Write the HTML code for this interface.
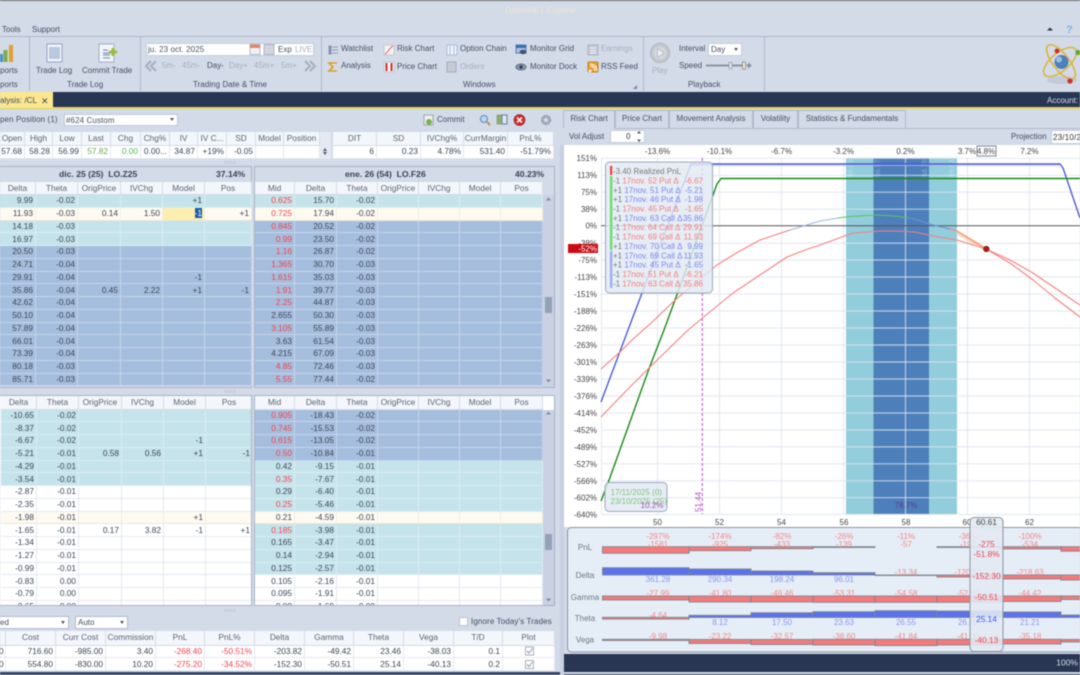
<!DOCTYPE html>
<html><head><meta charset="utf-8"><title>OptionNET Explorer</title>
<style>
html,body{margin:0;padding:0;background:#d3dae8}
#p{position:relative;width:1080px;height:675px;overflow:hidden;background:#d3dae8;font-family:"Liberation Sans",sans-serif;font-size:8px;color:#465063;filter:blur(.4px)}
.a{position:absolute;white-space:nowrap;line-height:10px}
.d{color:#a6afbf}
.g{position:absolute;background:#aeb8ca;width:1px}
.box{position:absolute;background:#fff;border:1px solid #b4bdce;box-sizing:border-box}
.arr{position:absolute;width:0;height:0;border-left:2.5px solid transparent;border-right:2.5px solid transparent;border-top:3px solid #556}
table{position:absolute;border-collapse:separate;border-spacing:0;table-layout:fixed;font-size:8.3px;color:#3c4658}
td,th{box-sizing:border-box;overflow:hidden;white-space:nowrap;line-height:11px}
td{height:12.75px;padding:0 2px 0 0;text-align:right;border-right:1px solid rgba(255,255,255,.35);border-bottom:1px solid rgba(255,255,255,.35)}
th{height:13px;font-weight:normal;color:#5a6475;background:#f3f6fb;border-right:1px solid #d6dce8;border-bottom:1px solid #d6dce8;padding:0}
.c{background:#c5e3ea}.b{background:#a6bedd}.y{background:#fffaf0}.w{background:#fff}
.w td{border-right:1px solid #e4e8f0;border-bottom:1px solid #e4e8f0}
.y td{border-right:1px solid #f0ede2;border-bottom:1px solid #e8e6dc}
.r{color:#f0434e}
.pan{position:absolute;border:1px solid #a9b3c6;box-sizing:border-box;overflow:hidden}
.tab{position:absolute;top:110px;height:18px;box-sizing:border-box;border:1px solid #b0bacb;border-bottom:0;text-align:center;line-height:16px;background:#d3dae8;color:#465063}
.sb{position:absolute;background:#c9d1e3;width:11px}
.th{position:absolute;left:2px;width:7px;height:16px;background:#93a2b7}
.spl{position:absolute;width:12px;height:3px;background:repeating-linear-gradient(90deg,#b5bfd0 0 1px,#dfe4ee 1px 2px)}
svg{position:absolute;left:0;top:0}
</style></head><body><div id="p">

<!-- title + chrome -->
<div style="position:absolute;left:0;top:0;width:1080px;height:1px;background:#666"></div>
<div class="a" style="left:505px;top:6px;color:#f1ead0;opacity:.9">OptionNET Explorer</div>
<div class="a" style="left:2px;top:25px">Tools</div>
<div class="a" style="left:32px;top:25px">Support</div>
<div style="position:absolute;left:0;top:36px;width:1080px;height:1px;background:#aeb8ca"></div>
<div class="g" style="left:29px;top:37px;height:54px"></div>
<div class="g" style="left:140px;top:37px;height:54px"></div>
<div class="g" style="left:321px;top:37px;height:54px"></div>
<div class="g" style="left:643px;top:37px;height:54px"></div>
<div class="g" style="left:764px;top:37px;height:54px"></div>

<!-- ribbon text -->
<div class="a" style="left:0;top:66px">ports</div>
<div class="a" style="left:0;top:80px">ports</div>
<div class="a" style="left:36px;top:66px">Trade Log</div>
<div class="a" style="left:82px;top:66px">Commit Trade</div>
<div class="a" style="left:67px;top:80px">Trade Log</div>

<div class="box" style="left:146px;top:43px;width:168px;height:13px;border-color:#c6cedc"></div>
<div class="a" style="left:148px;top:44.5px;letter-spacing:.1px">ju. 23 oct. 2025</div>
<div class="a" style="left:278px;top:44.5px">Exp</div>
<div class="a d" style="left:295px;top:44.5px">LIVE</div>
<div class="a d" style="left:162px;top:61px">5m-</div>
<div class="a d" style="left:182px;top:61px">45m-</div>
<div class="a" style="left:207px;top:61px">Day-</div>
<div class="a d" style="left:229px;top:61px">Day+</div>
<div class="a d" style="left:254px;top:61px">45m+</div>
<div class="a d" style="left:281px;top:61px">5m+</div>
<div class="a" style="left:193px;top:80px;letter-spacing:.05px">Trading Date &amp; Time</div>

<div class="a" style="left:341px;top:44px">Watchlist</div>
<div class="a" style="left:341px;top:61px">Analysis</div>
<div class="a" style="left:397px;top:44px">Risk Chart</div>
<div class="a" style="left:397px;top:62px">Price Chart</div>
<div class="a" style="left:460px;top:44px">Option Chain</div>
<div class="a d" style="left:460px;top:62px">Orders</div>
<div class="a" style="left:530px;top:44px">Monitor Grid</div>
<div class="a" style="left:530px;top:62px">Monitor Dock</div>
<div class="a d" style="left:601px;top:44px">Earnings</div>
<div class="a" style="left:601px;top:62px">RSS Feed</div>
<div class="a" style="left:463px;top:80px">Windows</div>
<div class="a d" style="left:652px;top:66px">Play</div>
<div class="a" style="left:679px;top:44px">Interval</div>
<div class="box" style="left:708px;top:43px;width:34px;height:13px;border-color:#c6cedc"></div>
<div class="a" style="left:711px;top:44.5px">Day</div>
<div class="arr" style="left:734px;top:48px"></div>
<div class="a" style="left:679px;top:61px">Speed</div>
<div class="a" style="left:688px;top:80px">Playback</div>

<!-- navy bar -->
<div style="position:absolute;left:0;top:92px;width:1080px;height:15px;background:#283654"></div>
<div style="position:absolute;left:0;top:107px;width:1080px;height:1.5px;background:#e6d35a"></div>
<div style="position:absolute;left:0;top:92px;width:53px;height:16px;background:#fbe88e"></div>
<div class="a" style="left:0;top:96px;color:#3f4a5f">alysis: /CL</div>
<div class="a" style="left:41px;top:96px;color:#3f4a5f;font-size:9px">✕</div>
<div class="a" style="left:1047px;top:96px;color:#d6dbe8">Account:</div>

<!-- left toolbar -->
<div class="a" style="left:0;top:115px;letter-spacing:.1px">pen Position (1)</div>
<div class="box" style="left:64px;top:114px;width:114px;height:12px;border-color:#c0c8d8"></div>
<div class="a" style="left:66px;top:115.5px;letter-spacing:.1px">#624 Custom</div>
<div class="arr" style="left:170px;top:118px"></div>
<div class="a" style="left:437px;top:115px">Commit</div>

<!-- top tables -->
<table style="left:0;top:132px;width:320px">
<colgroup><col width="25"><col width="28"><col width="29"><col width="29"><col width="30"><col width="29"><col width="28"><col width="29"><col width="29"><col width="28"><col width="36"></colgroup>
<tr><th style="height:14px">Open<th>High<th>Low<th>Last<th>Chg<th>Chg%<th>IV<th>IV C...<th>SD<th>Model<th>Position</tr>
<tr class="w"><td>57.68<td>58.28<td>56.99<td style="color:#6aa84f">57.82<td style="color:#55b65a">0.00<td>0.00...<td>34.87<td>+19%<td>-0.05<td><td></tr>
</table>
<div class="sb" style="left:320px;top:132px;height:27px;background:#e4e9f2"></div>
<div class="arr" style="left:323px;top:152px"></div>
<div class="arr" style="left:323px;top:148px;transform:rotate(180deg)"></div>
<table style="left:333px;top:132px;width:221px">
<colgroup><col width="44"><col width="44"><col width="43"><col width="44"><col width="46"></colgroup>
<tr><th style="height:14px">DIT<th>SD<th>IVChg%<th>CurrMargin<th>PnL%</tr>
<tr class="w"><td>6<td>0.23<td>4.78%<td>531.40<td>-51.79%</tr>
</table>
<div class="spl" style="left:225px;top:161px"></div>

<!-- dic upper -->
<div class="pan" style="left:-1px;top:166px;width:253px;height:222px;background:#d3dae8"></div>
<div class="a" style="left:59px;top:169px;font-size:8.6px;font-weight:bold;color:#3a4456">dic. 25 (25)&nbsp; LO.Z25</div>
<div class="a" style="left:216px;top:169px;font-size:8.6px;font-weight:bold;color:#3a4456">37.14%</div>
<table style="left:0;top:182px;width:252px">
<colgroup><col width="36"><col width="42"><col width="43"><col width="42"><col width="42"><col width="47"></colgroup>
<tr><th>Delta<th>Theta<th>OrigPrice<th>IVChg<th>Model<th>Pos</tr>
<tr class="c"><td>9.99<td>-0.02<td><td><td>+1<td></tr>
<tr class="y"><td>11.93<td>-0.03<td>0.14<td>1.50<td style="background:#fdeeb0"><span style="background:#1c5aa6;color:#fff">-1</span><td>+1</tr>
<tr class="c"><td>14.18<td>-0.03<td><td><td><td></tr>
<tr class="c"><td>16.97<td>-0.03<td><td><td><td></tr>
<tr class="b"><td>20.50<td>-0.03<td><td><td><td></tr>
<tr class="b"><td>24.71<td>-0.04<td><td><td><td></tr>
<tr class="b"><td>29.91<td>-0.04<td><td><td>-1<td></tr>
<tr class="b"><td>35.86<td>-0.04<td>0.45<td>2.22<td>+1<td>-1</tr>
<tr class="b"><td>42.62<td>-0.04<td><td><td><td></tr>
<tr class="b"><td>50.10<td>-0.04<td><td><td><td></tr>
<tr class="b"><td>57.89<td>-0.04<td><td><td><td></tr>
<tr class="b"><td>66.01<td>-0.04<td><td><td><td></tr>
<tr class="b"><td>73.39<td>-0.04<td><td><td><td></tr>
<tr class="b"><td>80.18<td>-0.03<td><td><td><td></tr>
<tr class="b"><td>85.71<td>-0.03<td><td><td><td></tr>
</table>

<!-- ene upper -->
<div class="pan" style="left:254px;top:166px;width:301px;height:222px;background:#d3dae8"></div>
<div class="a" style="left:345px;top:169px;font-size:8.6px;font-weight:bold;color:#3a4456">ene. 26 (54)&nbsp; LO.F26</div>
<div class="a" style="left:515px;top:169px;font-size:8.6px;font-weight:bold;color:#3a4456">40.23%</div>
<table style="left:255px;top:182px;width:288px">
<colgroup><col width="40"><col width="42"><col width="41"><col width="41"><col width="41"><col width="41"><col width="42"></colgroup>
<tr><th>Mid<th>Delta<th>Theta<th>OrigPrice<th>IVChg<th>Model<th>Pos</tr>
<tr class="c"><td class="r">0.625<td>15.70<td>-0.02<td><td><td><td></tr>
<tr class="y"><td class="r">0.725<td>17.94<td>-0.02<td><td><td><td></tr>
<tr class="b"><td class="r">0.845<td>20.52<td>-0.02<td><td><td><td></tr>
<tr class="b"><td class="r">0.99<td>23.50<td>-0.02<td><td><td><td></tr>
<tr class="b"><td class="r">1.16<td>26.87<td>-0.02<td><td><td><td></tr>
<tr class="b"><td class="r">1.365<td>30.70<td>-0.03<td><td><td><td></tr>
<tr class="b"><td class="r">1.615<td>35.03<td>-0.03<td><td><td><td></tr>
<tr class="b"><td class="r">1.91<td>39.77<td>-0.03<td><td><td><td></tr>
<tr class="b"><td class="r">2.25<td>44.87<td>-0.03<td><td><td><td></tr>
<tr class="b"><td>2.655<td>50.30<td>-0.03<td><td><td><td></tr>
<tr class="b"><td class="r">3.105<td>55.89<td>-0.03<td><td><td><td></tr>
<tr class="b"><td>3.63<td>61.54<td>-0.03<td><td><td><td></tr>
<tr class="b"><td>4.215<td>67.09<td>-0.03<td><td><td><td></tr>
<tr class="b"><td class="r">4.85<td>72.46<td>-0.03<td><td><td><td></tr>
<tr class="b"><td class="r">5.55<td>77.44<td>-0.02<td><td><td><td></tr>
</table>
<div class="sb" style="left:543px;top:195px;height:192px"></div>
<div class="th" style="left:545px;top:297px"></div>
<div class="spl" style="left:225px;top:390px"></div>

<!-- dic lower -->
<div class="pan" style="left:-1px;top:395px;width:253px;height:211px;background:#fff">
<table style="left:1px;top:0;width:252px">
<colgroup><col width="36"><col width="42"><col width="43"><col width="42"><col width="42"><col width="47"></colgroup>
<tr><th style="height:13.5px">Delta<th>Theta<th>OrigPrice<th>IVChg<th>Model<th>Pos</tr>
<tr class="c"><td>-10.65<td>-0.02<td><td><td><td></tr>
<tr class="c"><td>-8.37<td>-0.02<td><td><td><td></tr>
<tr class="c"><td>-6.67<td>-0.02<td><td><td>-1<td></tr>
<tr class="c"><td>-5.21<td>-0.01<td>0.58<td>0.56<td>+1<td>-1</tr>
<tr class="c"><td>-4.29<td>-0.01<td><td><td><td></tr>
<tr class="c"><td>-3.54<td>-0.01<td><td><td><td></tr>
<tr class="w"><td>-2.87<td>-0.01<td><td><td><td></tr>
<tr class="w"><td>-2.35<td>-0.01<td><td><td><td></tr>
<tr class="y"><td>-1.98<td>-0.01<td><td><td>+1<td></tr>
<tr class="w"><td>-1.65<td>-0.01<td>0.17<td>3.82<td>-1<td>+1</tr>
<tr class="w"><td>-1.34<td>-0.01<td><td><td><td></tr>
<tr class="w"><td>-1.27<td>-0.01<td><td><td><td></tr>
<tr class="w"><td>-0.99<td>-0.01<td><td><td><td></tr>
<tr class="w"><td>-0.83<td>0.00<td><td><td><td></tr>
<tr class="w"><td>-0.79<td>0.00<td><td><td><td></tr>
<tr class="w"><td>-0.65<td>0.00<td><td><td><td></tr>
</table></div>

<!-- ene lower -->
<div class="pan" style="left:254px;top:395px;width:301px;height:211px;background:#fff">
<table style="left:0;top:0;width:288px">
<colgroup><col width="40"><col width="42"><col width="41"><col width="41"><col width="41"><col width="41"><col width="42"></colgroup>
<tr><th style="height:13.5px">Mid<th>Delta<th>Theta<th>OrigPrice<th>IVChg<th>Model<th>Pos</tr>
<tr class="b"><td class="r">0.905<td>-18.43<td>-0.02<td><td><td><td></tr>
<tr class="b"><td class="r">0.745<td>-15.53<td>-0.02<td><td><td><td></tr>
<tr class="b"><td class="r">0.615<td>-13.05<td>-0.02<td><td><td><td></tr>
<tr class="b"><td class="r">0.50<td>-10.84<td>-0.01<td><td><td><td></tr>
<tr class="c"><td>0.42<td>-9.15<td>-0.01<td><td><td><td></tr>
<tr class="c"><td class="r">0.35<td>-7.67<td>-0.01<td><td><td><td></tr>
<tr class="c"><td>0.29<td>-6.40<td>-0.01<td><td><td><td></tr>
<tr class="c"><td class="r">0.25<td>-5.46<td>-0.01<td><td><td><td></tr>
<tr class="y"><td>0.21<td>-4.59<td>-0.01<td><td><td><td></tr>
<tr class="c"><td class="r">0.185<td>-3.98<td>-0.01<td><td><td><td></tr>
<tr class="c"><td>0.165<td>-3.47<td>-0.01<td><td><td><td></tr>
<tr class="c"><td>0.14<td>-2.94<td>-0.01<td><td><td><td></tr>
<tr class="c"><td>0.125<td>-2.57<td>-0.01<td><td><td><td></tr>
<tr class="w"><td>0.105<td>-2.16<td>-0.01<td><td><td><td></tr>
<tr class="w"><td>0.095<td>-1.91<td>-0.01<td><td><td><td></tr>
<tr class="w"><td>0.08<td>-1.69<td>0.00<td><td><td><td></tr>
</table>
<div class="sb" style="left:288px;top:14px;height:196px"></div>
<div class="th" style="left:290px;top:138px"></div>
</div>
<div class="spl" style="left:225px;top:609px"></div>

<!-- bottom left -->
<div class="box" style="left:-2px;top:616px;width:71px;height:13px"></div>
<div class="a" style="left:0;top:617.5px">ed</div>
<div class="arr" style="left:61px;top:621px"></div>
<div class="box" style="left:75px;top:616px;width:53px;height:13px"></div>
<div class="a" style="left:78px;top:617.5px">Auto</div>
<div class="arr" style="left:120px;top:621px"></div>
<div class="box" style="left:459px;top:617px;width:9px;height:9px;border-color:#bcc4d2"></div>
<div class="a" style="left:471px;top:617px;letter-spacing:.12px">Ignore Today's Trades</div>
<table style="left:-1px;top:631px;width:556px">
<colgroup><col width="7"><col width="50"><col width="50"><col width="50"><col width="49"><col width="50"><col width="50"><col width="49"><col width="50"><col width="50"><col width="49"><col width="52"></colgroup>
<tr><th style="height:14.5px"><th>Cost<th>Curr Cost<th>Commission<th>PnL<th>PnL%<th>Delta<th>Gamma<th>Theta<th>Vega<th>T/D<th>Plot</tr>
<tr class="w"><td>0<td>716.60<td>-985.00<td>3.40<td class="r">-268.40<td class="r">-50.51%<td>-203.82<td>-49.42<td>23.46<td>-38.03<td>0.1<td></tr>
<tr class="w"><td>0<td>554.80<td>-830.00<td>10.20<td class="r">-275.20<td class="r">-34.52%<td>-152.30<td>-50.51<td>25.14<td>-40.13<td>0.2<td></tr>
</table>
<div style="position:absolute;left:0;top:672px;width:560px;height:3px;background:#3a4866"></div>

<!-- right panel -->
<div style="position:absolute;left:560px;top:145px;width:4px;height:530px;background:#c7cfe3"></div>
<div class="tab" style="left:563px;width:52px">Risk Chart</div>
<div class="tab" style="left:615px;width:54px">Price Chart</div>
<div class="tab" style="left:669px;width:84px">Movement Analysis</div>
<div class="tab" style="left:753px;width:45px">Volatility</div>
<div class="tab" style="left:798px;width:108px">Statistics &amp; Fundamentals</div>
<div style="position:absolute;left:615px;top:127.5px;width:465px;height:1px;background:#b0bacb"></div>
<div class="a" style="left:569px;top:132px">Vol Adjust</div>
<div class="box" style="left:610px;top:130px;width:35px;height:13px;border-color:#c4ccdb"></div>
<div class="a" style="left:626px;top:132px;color:#333">0</div>
<div class="a" style="left:1011px;top:132px">Projection</div>
<div class="box" style="left:1051px;top:130px;width:40px;height:14px;border-color:#c4ccdb"></div>
<div class="a" style="left:1053px;top:132.5px;letter-spacing:.2px;color:#333">23/10/2</div>
<div style="position:absolute;left:564px;top:145px;width:516px;height:382px;background:#fff"></div>

<svg width="1080" height="675" viewBox="0 0 1080 675" font-family="Liberation Sans, sans-serif" font-size="8">
<!-- ribbon icons -->
<g>
<rect x="0" y="54" width="3" height="8" fill="#4a90c8"/><rect x="3.5" y="50" width="4" height="12" fill="#7cae4a"/><rect x="9" y="45" width="4" height="17" fill="#e0a030"/>
<rect x="47" y="44" width="15" height="18" fill="#f2f5fa" stroke="#93a5c6"/><rect x="49" y="47" width="11" height="12" fill="#b9c8e0"/>
<rect x="99" y="44" width="15" height="18" fill="#f2f5fa" stroke="#a3aec4"/><rect x="103" y="52" width="7" height="4" fill="#a4b8d2"/><path d="M103 50h5M103 58h7" stroke="#7a8aa2"/><path d="M113 48v8M109 52h8" stroke="#9cbc3c" stroke-width="3"/>
<rect x="250" y="44.5" width="10" height="10" fill="#eef0f6" stroke="#b3bccd"/><rect x="250" y="44.5" width="10" height="3.5" fill="#e08868"/>
<rect x="264" y="44.5" width="10" height="10" fill="#cfd4de" stroke="#b0b8c6"/>
<path d="M156 61l-5 5 5 5 M151 61l-5 5 5 5" fill="none" stroke="#a6afbf" stroke-width="2"/>
<path d="M305 61l5 5-5 5 M310 61l5 5-5 5" fill="none" stroke="#a6afbf" stroke-width="2"/>
<path d="M329 46h2v2h-2zM329 49h2v2h-2zM329 52h2v2h-2zM332 47h6M332 50h6M332 53h6" fill="#7d8ba0" stroke="#7d8ba0" stroke-width=".8"/>
<path d="M337 63h-8l4 4-4 4h8" fill="none" stroke="#dca020" stroke-width="1.6"/>
<rect x="384" y="45" width="10" height="10" fill="#f4f4f4" stroke="#c4c8d0"/><path d="M385 54c3-1 4-6 8-8" stroke="#d66" fill="none"/>
<rect x="384" y="62" width="10" height="10" fill="#f4f4f4" stroke="#c4c8d0"/><path d="M386.5 63v8M391.5 63v8" stroke="#c33" stroke-width="2"/>
<rect x="447" y="45" width="10" height="10" fill="#eef3fb" stroke="#a8c0de"/><path d="M450 45v10M454 45v10" stroke="#a8c0de"/>
<rect x="447" y="62" width="9" height="10" fill="#c6ccd6" stroke="#aab"/>
<rect x="516" y="45" width="10" height="8" fill="#a8c4e8" stroke="#5a80b0"/><rect x="516" y="45" width="10" height="3" fill="#3a70b0"/><ellipse cx="523" cy="52" rx="3.5" ry="2.2" fill="#456"/>
<ellipse cx="521" cy="67" rx="5" ry="3" fill="#8a9ab0" stroke="#5a6a80"/><circle cx="521" cy="67" r="1.6" fill="#334"/>
<rect x="588" y="45" width="10" height="10" fill="#c4cad4" stroke="#aab3c0"/><path d="M590 48h6M590 50.5h6M590 53h6" stroke="#eef"/>
<rect x="588" y="62" width="10" height="10" rx="1" fill="#e8a030" stroke="#c08020"/><path d="M590 70a1 1 0 1 0 .1 0M590 66c3 0 5 2 5 5M590 64c4 0 7 3 7 7" stroke="#fff" fill="none"/>
<path d="M633 89l4-4v4z" fill="#7a8496"/>
<circle cx="660" cy="53" r="9.5" fill="#c4c8cf" stroke="#b0b4bc"/><circle cx="660" cy="53" r="6.5" fill="#d3d6dc"/><path d="M657.5 48.5l6.5 4.5-6.5 4.5z" fill="#eef0f4" stroke="#a8acb4" stroke-width=".6"/>
<path d="M706 65.5h38" stroke="#8c95a6" stroke-width="2"/><path d="M711 65.5h-4" stroke="#8c95a6"/>
<rect x="729" y="62.5" width="3" height="6" fill="#dfe3ea" stroke="#8d95a5" stroke-width=".7"/><rect x="742.5" y="62" width="3" height="7" fill="#f6eebc" stroke="#808898" stroke-width=".8"/>
<path d="M749 63v5M746.5 65.5h5" stroke="#7f8899" stroke-width="1.5"/>
<path d="M1047 30.5l3-3 3 3z" fill="#333"/>
<text x="1066" y="33" font-size="11" font-weight="bold" fill="#7cb4e0">?</text>
<!-- atom -->
<ellipse cx="1062" cy="80" rx="15" ry="4" fill="#bcc4d2" opacity=".7"/>
<g fill="none" stroke="#dcb434" stroke-width="1.5">
<ellipse cx="1061" cy="62" rx="21" ry="8" transform="rotate(52 1061 62)"/>
<ellipse cx="1060" cy="62" rx="20" ry="9" transform="rotate(-40 1060 62)"/>
</g>
<circle cx="1061.5" cy="62" r="7" fill="#4d7fbb"/><circle cx="1059" cy="59.5" r="3" fill="#9cc0e4"/>
<circle cx="1057" cy="51" r="2.4" fill="#c83030"/><circle cx="1078" cy="52.5" r="2.6" fill="#58a83c"/><circle cx="1070" cy="81" r="2.6" fill="#d03030"/>
<!-- toolbar icons -->
<rect x="424" y="115" width="9" height="10" fill="#eee" stroke="#9aa"/><circle cx="429" cy="122" r="3" fill="#7cb050"/>
<circle cx="484" cy="119" r="3.5" fill="#bcd8f0" stroke="#5a86b8"/><path d="M487 122l3 3" stroke="#c89040" stroke-width="2"/>
<rect x="497" y="115" width="5" height="9" fill="#8cb070" stroke="#6a8a50" stroke-width=".5"/><rect x="502" y="115" width="5" height="9" fill="#dde6f2" stroke="#6a80a0"/>
<circle cx="519.5" cy="120" r="5.3" fill="#d03030" stroke="#a02020"/><path d="M517 117.5l5 5M522 117.5l-5 5" stroke="#fff" stroke-width="1.5"/>
<circle cx="546" cy="120" r="4.5" fill="#a8b0c0" stroke="#808a9c" stroke-dasharray="2 1"/><circle cx="546" cy="120" r="1.8" fill="#dde"/>
</g>
<!-- checkboxes -->
<rect x="525.5" y="647" width="8" height="8" fill="#fff" stroke="#a8b0be"/><path d="M527 651l2 2 3.5-4.5" stroke="#8a94a4" fill="none"/>
<rect x="525.5" y="660.5" width="8" height="8" fill="#fff" stroke="#a8b0be"/><path d="M527 664.5l2 2 3.5-4.5" stroke="#8a94a4" fill="none"/>
<!-- scroll arrows -->
<path d="M546 200.5l2.5-3 2.5 3zM546 379.5l2.5 3 2.5-3zM546 414.5l2.5-3 2.5 3zM546 598.5l2.5 3 2.5-3z" fill="#7f8a9e"/>
<path d="M637 133.5l2-2.5 2 2.5zM637 139.5l2 2.5 2-2.5z" fill="#556"/>

<!-- chart bands -->
<rect x="846" y="158" width="111" height="356" fill="#92cddc"/>
<rect x="873.5" y="158" width="55.5" height="356" fill="#4d7fbb"/>
<g fill="#fff" opacity=".35" font-size="7">
<text transform="translate(853,177) rotate(-90)">56.03</text>
<text transform="translate(880,177) rotate(-90)">56.97</text>
<text transform="translate(927,177) rotate(-90)">58.75</text>
<text transform="translate(954,177) rotate(-90)">59.63</text>
</g>
<!-- grid -->
<g stroke="rgba(222,227,238,.75)" stroke-width="1.2">
<path d="M601.5 158V514M657.5 158V514M719.5 158V514M781.5 158V514M843.5 158V514M905.5 158V514M967.5 158V514M1029.5 158V514"/>
<path d="M601 158.3H1080M601 175.3H1080M601 192.2H1080M601 209.2H1080M601 243.1H1080M601 260H1080M601 277H1080M601 294H1080M601 311H1080M601 328H1080M601 345H1080M601 362H1080M601 379H1080M601 396H1080M601 413H1080M601 430H1080M601 446.9H1080M601 463.8H1080M601 480.8H1080M601 497.7H1080M601 514.5H1080"/>
</g>
<path d="M601 225.7H1080" stroke="#555" stroke-width="1"/>
<path d="M702.3 158V514" stroke="#c266d2" stroke-width="1.2" stroke-dasharray="3 2"/>
<!-- curves -->
<g fill="none" stroke-linejoin="round">
<polyline points="601,402 628,330 642,293 691,164 1060,164 1063,168 1080,218" stroke="#4f5bd5" stroke-width="1.4"/>
<path d="M691 165.5H1060" stroke="#b8bcf0" stroke-width=".8"/>
<polyline points="601,501 608,483 650,366 664,330 675,300 717,184 721,178.5 1080,178.5" stroke="#1a8a1a" stroke-width="1.4"/>
<polyline points="601,369 620,352 632,340 650,324 673,302 695,283 717,265 738,252 760,240 790,230" stroke="#f77f7f" stroke-width="1.1"/>
<polyline points="790,230 820,221 838,218" stroke="#9ab8e8" stroke-width="1.1"/>
<polyline points="838,218 850,216.5 877,215 895,216 908,218" stroke="#56c856" stroke-width="1.1"/>
<polyline points="908,218 915,219 933,225 950,229" stroke="#6a90d8" stroke-width="1.1"/>
<polyline points="950,229 957,231 986,249 1010,260 1033,273 1055,288 1080,305" stroke="#f77f7f" stroke-width="1.1"/>
<polyline points="601,417 625,392 650,367 688,330 700,320 733,293 760,275 787,257 805,250 820,245 853,233 880,231 897,231 915,232 933,236 957,240 986,249 1010,263 1033,280 1055,298 1080,317" stroke="#f77f7f" stroke-width="1.1"/>
<path d="M957 232.5L986 249" stroke="#eda868" stroke-width="4" opacity=".4"/>
</g>
<circle cx="986.3" cy="249" r="2.8" fill="#cc1010" stroke="#333" stroke-width=".6"/>
<!-- y labels -->
<g fill="#444" text-anchor="end">
<text x="597" y="161">151%</text><text x="597" y="178">113%</text><text x="597" y="195">75%</text><text x="597" y="212">38%</text><text x="597" y="228.7">0%</text><text x="597" y="246">-38%</text><text x="597" y="263">-75%</text><text x="597" y="280">-113%</text><text x="597" y="297">-151%</text><text x="597" y="314">-188%</text><text x="597" y="331">-226%</text><text x="597" y="348">-263%</text><text x="597" y="365">-301%</text><text x="597" y="382">-339%</text><text x="597" y="399">-376%</text><text x="597" y="416">-414%</text><text x="597" y="433">-452%</text><text x="597" y="450">-489%</text><text x="597" y="466.8">-527%</text><text x="597" y="483.8">-566%</text><text x="597" y="500.7">-602%</text><text x="597" y="517.5">-640%</text>
</g>
<rect x="568" y="244" width="30" height="9" fill="#cc0a10"/>
<text x="597" y="251.5" text-anchor="end" fill="#fff">-52%</text>
<!-- top % -->
<g fill="#444" text-anchor="middle">
<text x="657.5" y="154">-13.6%</text><text x="719.5" y="154">-10.1%</text><text x="781.5" y="154">-6.7%</text><text x="843.5" y="154">-3.2%</text><text x="905.5" y="154">0.2%</text><text x="967" y="154">3.7%</text><text x="986" y="154">4.8%</text><text x="1029.5" y="154">7.2%</text>
</g>
<rect x="977" y="146" width="19" height="10" fill="none" stroke="#7c8698"/>
<!-- x labels -->
<g fill="#444" text-anchor="middle">
<text x="657.5" y="525">50</text><text x="719.5" y="525">52</text><text x="781.5" y="525">54</text><text x="844" y="525">56</text><text x="906" y="525">58</text><text x="967" y="525">60</text><text x="1029.5" y="525">62</text>
</g>
<text transform="translate(701,512) rotate(-90)" fill="#b050c0">51.44</text>
<text x="906" y="508" text-anchor="middle" fill="#5a3a90">78.7%</text>
<!-- tooltip -->
<rect x="605.5" y="162" width="107" height="131" rx="4" fill="rgba(226,233,243,.84)" stroke="#9aa8bd"/>
<rect x="610" y="166" width="2.3" height="9" fill="#ee4444"/><rect x="610" y="176" width="2.3" height="74" fill="#66dd66"/><rect x="610" y="251" width="2.3" height="37" fill="#99aaf0"/>
<text x="613" y="174" fill="#777">-3.40 Realized PnL</text>
<g fill="#777">
<text x="613" y="183.5">-1 <tspan fill="#f07f7f">17nov. 52 Put Δ</tspan></text>
<text x="613" y="192.8">+1 <tspan fill="#7a85f0">17nov. 51 Put Δ</tspan></text>
<text x="613" y="202.2">+1 <tspan fill="#7a85f0">17nov. 46 Put Δ</tspan></text>
<text x="613" y="211.5">-1 <tspan fill="#f07f7f">17nov. 45 Put Δ</tspan></text>
<text x="613" y="220.9">+1 <tspan fill="#7a85f0">17nov. 63 Call Δ</tspan></text>
<text x="613" y="230.2">-1 <tspan fill="#f07f7f">17nov. 64 Call Δ</tspan></text>
<text x="613" y="239.6">-1 <tspan fill="#f07f7f">17nov. 69 Call Δ</tspan></text>
<text x="613" y="249">+1 <tspan fill="#7a85f0">17nov. 70 Call Δ</tspan></text>
<text x="613" y="258.3">+1 <tspan fill="#7a85f0">17nov. 69 Call Δ</tspan></text>
<text x="613" y="267.7">+1 <tspan fill="#7a85f0">17nov. 45 Put Δ</tspan></text>
<text x="613" y="277">-1 <tspan fill="#f07f7f">17nov. 51 Put Δ</tspan></text>
<text x="613" y="286.4">-1 <tspan fill="#f07f7f">17nov. 63 Call Δ</tspan></text>
</g>
<g text-anchor="end">
<text x="703" y="183.5" fill="#f07f7f">-6.67</text><text x="703" y="192.8" fill="#7a85f0">-5.21</text><text x="703" y="202.2" fill="#7a85f0">-1.98</text><text x="703" y="211.5" fill="#f07f7f">-1.65</text><text x="703" y="220.9" fill="#7a85f0">35.86</text><text x="703" y="230.2" fill="#f07f7f">29.91</text><text x="703" y="239.6" fill="#f07f7f">11.93</text><text x="703" y="249" fill="#7a85f0">9.99</text><text x="703" y="258.3" fill="#7a85f0">11.93</text><text x="703" y="267.7" fill="#7a85f0">-1.65</text><text x="703" y="277" fill="#f07f7f">-6.21</text><text x="703" y="286.4" fill="#f07f7f">35.86</text>
</g>
<rect x="605" y="482.5" width="62" height="29" rx="4" fill="rgba(226,233,243,.84)" stroke="#9aa8bd"/>
<text x="610.5" y="495" fill="#7fc07f">17/11/2025 (0)</text>
<text x="610.5" y="504" fill="#7fc07f">23/10/2025 (25)</text>
<text x="652" y="508" text-anchor="middle" fill="#a050b0">10.2%</text>

<!-- bottom panel -->
<rect x="567.5" y="527.5" width="540" height="124.5" rx="4" fill="#e5edf6" stroke="#8a94a5"/>
<rect x="564" y="654" width="516" height="18" fill="#283654"/>
<rect x="564" y="674" width="516" height="1" fill="#3a4866"/>
<text x="1078" y="665.5" text-anchor="end" fill="#d8dde8" font-size="8.5">100%</text>
<g fill="#6d7684" text-anchor="middle">
<text x="585" y="550">PnL</text><text x="585" y="578">Delta</text><text x="585" y="600">Gamma</text><text x="585" y="621">Theta</text><text x="585" y="642.5">Vega</text>
</g>
<g stroke="#7e8490" stroke-width=".9">
<g fill="#f57a7a">
<rect x="602.5" y="546.7" width="86.5" height="6.5"/><rect x="689" y="546.7" width="62" height="4"/><rect x="751" y="546.7" width="62" height="2"/><rect x="813" y="546.7" width="62" height=".8"/><rect x="937" y="546.7" width="63" height=".8"/><rect x="1000" y="546.7" width="61" height="2.2"/><rect x="1061" y="546.7" width="25" height="4.5"/>
<rect x="875" y="575" width="62" height=".5"/><rect x="937" y="575" width="63" height="2"/><rect x="1000" y="575" width="61" height="4"/><rect x="1061" y="575" width="25" height="5"/>
<rect x="602.5" y="596" width="86.5" height="4"/><rect x="689" y="596" width="62" height="6"/><rect x="751" y="596" width="62" height="6"/><rect x="813" y="596" width="62" height="6.3"/><rect x="875" y="596" width="62" height="6.3"/><rect x="937" y="596" width="63" height="6.3"/><rect x="1000" y="596" width="61" height="5.5"/><rect x="1061" y="596" width="25" height="3.5"/>
<rect x="602.5" y="617.3" width="86.5" height="1.8"/>
<rect x="602.5" y="639.3" width="86.5" height="1.2"/><rect x="689" y="639.5" width="62" height="4"/><rect x="751" y="639.5" width="62" height="5"/><rect x="813" y="639.3" width="62" height="5.7"/><rect x="875" y="639.3" width="62" height="6.3"/><rect x="937" y="639.3" width="63" height="5.7"/><rect x="1000" y="639.3" width="61" height="4.7"/><rect x="1061" y="639.5" width="25" height="2.5"/>
</g>
<g fill="#5a72ee">
<rect x="602.5" y="567.7" width="86.5" height="7.3"/><rect x="689" y="569" width="62" height="6"/><rect x="751" y="571" width="62" height="4"/><rect x="813" y="572.7" width="62" height="2.3"/>
<rect x="689" y="615.3" width="62" height="2.2"/><rect x="751" y="612.7" width="62" height="4.8"/><rect x="813" y="611.7" width="62" height="5.8"/><rect x="875" y="610.7" width="62" height="6.8"/><rect x="937" y="611" width="63" height="6.5"/><rect x="1000" y="612" width="61" height="5.5"/><rect x="1061" y="615" width="25" height="2.5"/>
</g>
</g>
<g fill="#f08a8a" text-anchor="middle">
<text x="658" y="539">-297%</text><text x="658" y="547">-1581</text><text x="720" y="539">-174%</text><text x="720" y="547">-925</text><text x="782" y="539">-82%</text><text x="782" y="547">-433</text><text x="844" y="539">-26%</text><text x="844" y="547">-139</text><text x="906" y="539">-11%</text><text x="906" y="547">-57</text><text x="968" y="539">-36%</text><text x="968" y="547">-192</text><text x="1030" y="539">-100%</text><text x="1030" y="547">-534</text>
<text x="906" y="575">-13.34</text><text x="968" y="575">-120.54</text><text x="1030" y="575">-218.63</text>
<text x="658" y="596">-27.99</text><text x="720" y="596">-41.80</text><text x="782" y="596">-49.46</text><text x="844" y="596">-53.31</text><text x="906" y="596">-54.58</text><text x="968" y="596">-52.90</text><text x="1030" y="596">-44.42</text>
<text x="658" y="618">-4.64</text>
<text x="658" y="639">-9.98</text><text x="720" y="639">-23.22</text><text x="782" y="639">-32.57</text><text x="844" y="639">-38.60</text><text x="906" y="639">-41.84</text><text x="968" y="639">-41.30</text><text x="1030" y="639">-35.18</text>
</g>
<g fill="#8a96f0" text-anchor="middle">
<text x="658" y="582">361.28</text><text x="720" y="582">290.34</text><text x="782" y="582">198.24</text><text x="844" y="582">96.01</text>
<text x="720" y="625">8.12</text><text x="782" y="625">17.50</text><text x="844" y="625">23.63</text><text x="906" y="625">26.55</text><text x="968" y="625">26.20</text><text x="1030" y="625">21.21</text>
</g>
<!-- highlight column -->
<rect x="970" y="517.5" width="33" height="134" rx="4" fill="rgba(226,233,243,.88)" stroke="#8a94a5"/>
<g text-anchor="middle" font-size="8.3">
<text x="986.5" y="525" fill="#444">60.61</text>
<text x="986.5" y="547" fill="#ee4450">-275</text><text x="986.5" y="557" fill="#ee4450">-51.8%</text>
<text x="986.5" y="579" fill="#ee4450">-152.30</text><text x="986.5" y="600" fill="#ee4450">-50.51</text>
<text x="986.5" y="622" fill="#3f55ee">25.14</text><text x="986.5" y="643" fill="#ee4450">-40.13</text>
</g>
</svg>
</div></body></html>
